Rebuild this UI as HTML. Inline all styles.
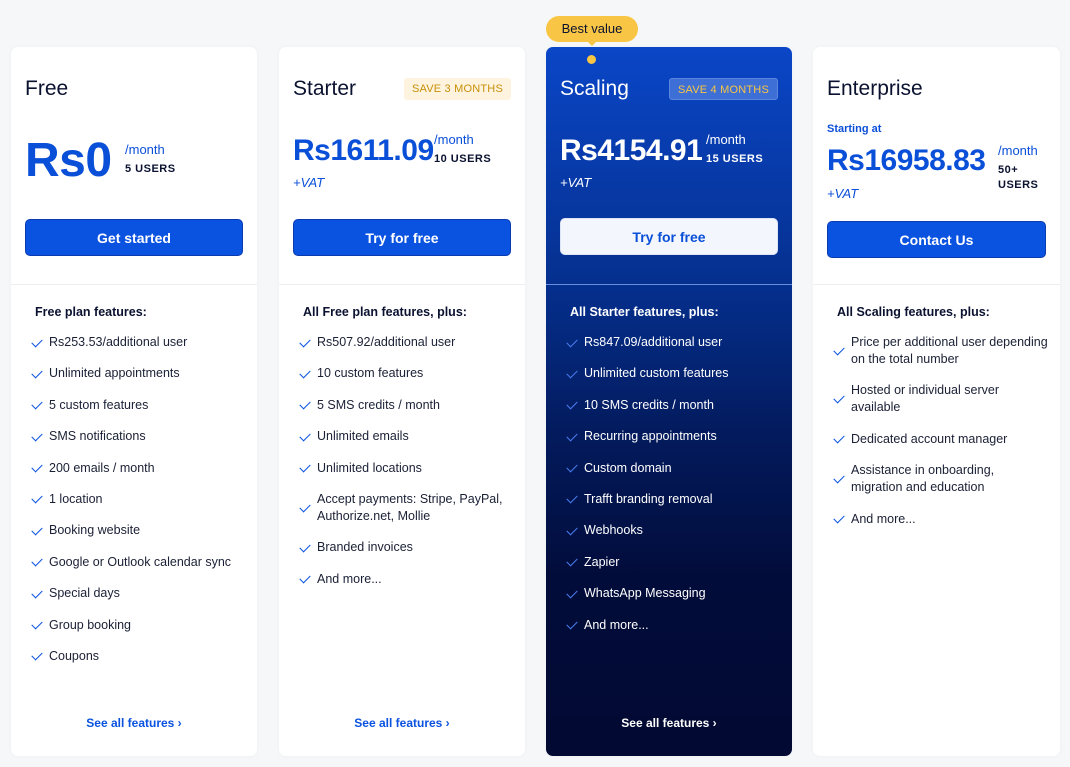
<!DOCTYPE html><html><head><style>
*{margin:0;padding:0;box-sizing:border-box}
body{width:1070px;height:767px;background:#f6f7f9;font-family:"Liberation Sans",sans-serif;position:relative;overflow:hidden}
.card{position:absolute;top:47px;width:246px;height:709px;background:#fff;border-radius:7px;box-shadow:0 0 4px rgba(0,0,0,.04)}
.t{position:absolute;left:14px;top:30px;font-size:21px;color:#0b1230}
.badge{position:absolute;right:14px;top:31px;height:22px;padding:0 8px;font-size:11px;line-height:22px;color:#c8900a;background:#fdf3de;border-radius:3px;letter-spacing:.2px}
.price{position:absolute;left:14px;font-weight:bold;color:#0a4fd8;letter-spacing:-.5px}
.pm{position:absolute;font-size:13px;color:#0a4fd8}
.us{position:absolute;font-size:11px;font-weight:bold;color:#0b1230;letter-spacing:.5px;line-height:15px}
.vat{position:absolute;left:14px;font-size:13px;font-style:italic;color:#0a4fd8}
.btn{position:absolute;left:14px;width:218px;height:37px;border-radius:5px;background:#0a52e0;color:#fff;font-size:14px;font-weight:bold;text-align:center;line-height:37px;border:1px solid #0a3cb0}
.div{position:absolute;left:0;right:0;top:237px;border-top:1px solid #eceef2}
.fh{position:absolute;left:24px;top:258px;font-size:12.5px;font-weight:bold;color:#0b1230}
ul{position:absolute;left:20px;top:287px;list-style:none;width:215px}
li{position:relative;padding-left:18px;font-size:12.5px;color:#1a2035;line-height:17px;margin-bottom:14.4px;display:flex;align-items:center;min-height:17px}
li:before{content:"";position:absolute;left:1px;top:50%;width:9px;height:5px;border-left:1.5px solid #0a52e0;border-bottom:1.5px solid #0a52e0;transform:translateY(-70%) rotate(-45deg)}
.see{position:absolute;bottom:26px;left:0;right:0;text-align:center;font-size:12px;font-weight:bold;color:#0a52e0}
.dk{background:linear-gradient(#0a46c7 0%,#05308f 33%,#031a5c 55%,#020c3a 75%,#020a33 100%);color:#fff}
.dk .t,.dk .price,.dk .pm,.dk .us,.dk .vat,.dk .fh,.dk li,.dk .see{color:#fff}
.dk li:before{border-color:#4a7df0}
</style></head><body>

<div class="card" style="left:11px">
<div class="t">Free</div>
<div class="price" style="top:88px;font-size:48px;line-height:52px">Rs0</div>
<div class="pm" style="left:114px;top:95px">/month</div>
<div class="us" style="left:114px;top:115px">5 USERS</div>
<div class="btn" style="top:172px">Get started</div>
<div class="div"></div>
<div class="fh">Free plan features:</div>
<ul><li>Rs253.53/additional user</li><li>Unlimited appointments</li><li>5 custom features</li><li>SMS notifications</li><li>200 emails / month</li><li>1 location</li><li>Booking website</li><li>Google or Outlook calendar sync</li><li>Special days</li><li>Group booking</li><li>Coupons</li></ul>
<div class="see">See all features &#x203A;</div>
</div>

<div class="card" style="left:279px">
<div class="t">Starter</div>
<div class="badge">SAVE 3 MONTHS</div>
<div class="price" style="top:86px;font-size:30px;line-height:36px">Rs1611.09</div>
<div class="pm" style="left:155px;top:85px">/month</div>
<div class="us" style="left:155px;top:105px">10 USERS</div>
<div class="vat" style="top:128px">+VAT</div>
<div class="btn" style="top:172px">Try for free</div>
<div class="div"></div>
<div class="fh">All Free plan features, plus:</div>
<ul><li>Rs507.92/additional user</li><li>10 custom features</li><li>5 SMS credits / month</li><li>Unlimited emails</li><li>Unlimited locations</li><li>Accept payments: Stripe, PayPal, Authorize.net, Mollie</li><li>Branded invoices</li><li>And more...</li></ul>
<div class="see">See all features &#x203A;</div>
</div>

<div style="position:absolute;left:546px;top:16px;width:92px;height:26px;background:#f8c544;border-radius:13px;font-size:13px;line-height:26px;text-align:center;color:#0b1230">Best value</div>
<div style="position:absolute;left:587px;top:41px;width:0;height:0;border-left:5px solid transparent;border-right:5px solid transparent;border-top:5px solid #f8c544"></div>
<div class="card dk" style="left:546px">
<div style="position:absolute;left:41px;top:8px;width:9px;height:9px;border-radius:50%;background:#f8c544"></div>
<div class="t">Scaling</div>
<div class="badge" style="background:#3d6fd6;color:#f8c544;border:1px solid #5a86e0">SAVE 4 MONTHS</div>
<div class="price" style="top:86px;font-size:30px;line-height:36px">Rs4154.91</div>
<div class="pm" style="left:160px;top:85px">/month</div>
<div class="us" style="left:160px;top:105px">15 USERS</div>
<div class="vat" style="top:128px">+VAT</div>
<div class="btn" style="top:171px;background:#f3f6fd;color:#0a4fd8;border-color:#dde4f5">Try for free</div>
<div class="div" style="border-color:#6a8fe0"></div>
<div class="fh">All Starter features, plus:</div>
<ul><li>Rs847.09/additional user</li><li>Unlimited custom features</li><li>10 SMS credits / month</li><li>Recurring appointments</li><li>Custom domain</li><li>Trafft branding removal</li><li>Webhooks</li><li>Zapier</li><li>WhatsApp Messaging</li><li>And more...</li></ul>
<div class="see">See all features &#x203A;</div>
</div>

<div class="card" style="left:813px;width:247px">
<div class="t">Enterprise</div>
<div style="position:absolute;left:14px;top:76px;font-size:11px;font-weight:bold;color:#0a4fd8">Starting at</div>
<div class="price" style="top:96px;font-size:30px;line-height:36px">Rs16958.83</div>
<div class="pm" style="left:185px;top:96px">/month</div>
<div class="us" style="left:185px;top:116px">50+<br>USERS</div>
<div class="vat" style="top:139px">+VAT</div>
<div class="btn" style="top:174px;width:219px">Contact Us</div>
<div class="div"></div>
<div class="fh">All Scaling features, plus:</div>
<ul><li>Price per additional user depending on the total number</li><li>Hosted or individual server available</li><li>Dedicated account manager</li><li>Assistance in onboarding, migration and education</li><li>And more...</li></ul>
</div>
</body></html>
